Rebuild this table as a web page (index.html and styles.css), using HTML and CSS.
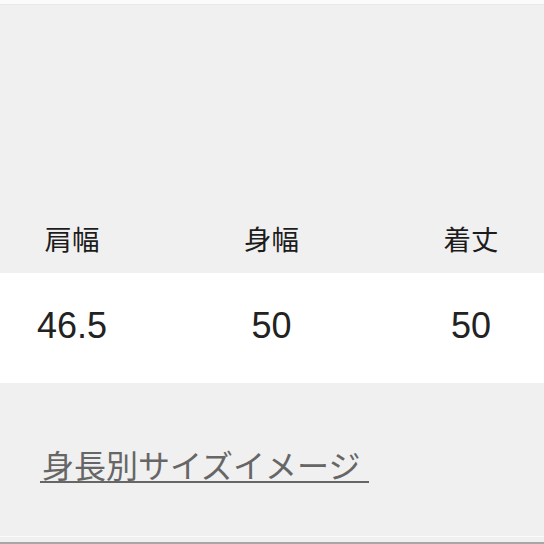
FILE: index.html
```html
<!DOCTYPE html>
<html lang="ja">
<head>
<meta charset="utf-8">
<link rel="stylesheet" href="styles.css">
</head>
<body>
<div class="top-strip"></div>
<div class="table">
  <div class="row head">
    <div class="cell">肩幅</div>
    <div class="cell">身幅</div>
    <div class="cell">着丈</div>
  </div>
  <div class="row values">
    <div class="cell">46.5</div>
    <div class="cell">50</div>
    <div class="cell">50</div>
  </div>
</div>
<div class="footer">
  <a class="size-link" href="#">身長別サイズイメージ</a>
  <div class="footer-lines"></div>
</div>
</body>
</html>
```
FILE: styles.css
```css
html, body {
  margin: 0;
  padding: 0;
  background: #f0f0f0;
}
body {
  width: 544px;
  height: 544px;
  overflow: hidden;
  font-family: "Liberation Sans", "Noto Sans CJK JP", sans-serif;
  color: #1c1c1c;
}
.top-strip {
  height: 4px;
  background: #fbfbfb;
  border-bottom: 1px solid #e9e9e9;
}
.table {
  display: flex;
  flex-direction: column;
}
.row {
  display: grid;
  grid-template-columns: 100px 100px 100px;
  column-gap: 99.5px;
  padding-left: 22px;
}
.cell {
  text-align: center;
  white-space: nowrap;
}
.head {
  padding-top: 219px;
  padding-bottom: 21px;
  font-family: "Noto Sans CJK JP", sans-serif;
  font-size: 27.5px;
  line-height: 28px;
  background: #f0f0f0;
}
.values {
  background: #ffffff;
  font-size: 36px;
  line-height: 106px;
  padding-bottom: 4px;
  color: #222222;
}
.footer {
  height: 161px;
  display: flex;
  flex-direction: column;
  padding-top: 65px;
  box-sizing: border-box;
}
.size-link {
  align-self: flex-start;
  margin-left: 40px;
  padding: 0 9px 1px 2px;
  font-family: "Noto Sans CJK JP", sans-serif;
  font-size: 32px;
  line-height: 32px;
  color: #666666;
  text-decoration: none;
  border-bottom: 2px solid #666666;
}
.footer-lines {
  margin-top: auto;
  height: 5px;
  border-top: 1px solid #fafafa;
  border-bottom: 2px solid #a6a6a6;
}
```
